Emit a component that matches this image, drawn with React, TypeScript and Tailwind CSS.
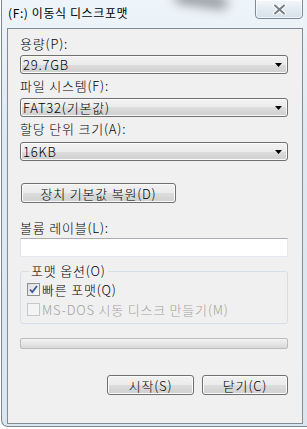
import React from "react";

const font = { fontFamily: '"Noto Sans CJK KR", "Noto Sans", sans-serif' };

function Combo({ value, className = "" }: { value: string; className?: string }) {
  return (
    <div
      className={`relative flex h-[19px] w-[268px] items-center rounded-[3px] border border-[#707070] bg-[linear-gradient(#f2f2f2,#ebebeb_50%,#dddddd_50%,#cfcfcf)] pl-[2px] text-[13px] leading-none tracking-[0.8px] text-black shadow-[inset_0_0_0_1px_#fbfbfb] ${className}`}
    >
      <span>{value}</span>
      <svg className="absolute right-[5px] top-[7px]" width="7" height="4" viewBox="0 0 7 4">
        <path d="M0 0h7L3.5 4z" fill="#000" />
      </svg>
    </div>
  );
}

function Button({ label, className = "" }: { label: string; className?: string }) {
  return (
    <div
      className={`flex h-[20px] items-center justify-center rounded-[3px] border border-[#707070] bg-[linear-gradient(#f2f2f2,#ebebeb_50%,#dddddd_50%,#cfcfcf)] text-[13px] leading-none tracking-[0.8px] text-black shadow-[inset_0_0_0_1px_#fbfbfb] ${className}`}
    >
      {label}
    </div>
  );
}

function Check({ checked, disabled, label }: { checked?: boolean; disabled?: boolean; label: string }) {
  return (
    <div className={`flex h-[14px] items-center gap-[2px] text-[13px] leading-none tracking-[0.8px] ${disabled ? "text-[#a3a3a3]" : "text-black"}`}>
      <div
        className={`flex h-[13px] w-[13px] items-center justify-center border ${
          disabled ? "border-[#c8c8c8] bg-[#f4f4f4]" : "border-[#8e8f8f] bg-[linear-gradient(135deg,#dcdcdc,#fbfbfb)]"
        }`}
      >
        {checked && (
          <svg width="9" height="9" viewBox="0 0 9 9">
            <path d="M1 4.5l2.3 2.6L8 1" stroke="#3c5a9a" strokeWidth="1.8" fill="none" />
          </svg>
        )}
      </div>
      <span>{label}</span>
    </div>
  );
}

export default function App() {
  return (
    <div className="relative h-[429px] w-[307px] overflow-hidden bg-white font-light" style={font}>
      {/* window frame */}
      <div className="ml-[1px] h-[427px] w-[310px] rounded-bl-[7px] border-b border-l border-[#7b8792] bg-[linear-gradient(#eef5fa,#dfe9f1_30%,#dce6ee)]">
        {/* title bar */}
        <div className="relative flex h-[28px] items-center pl-[6px] pb-[2px]">
          <div className="absolute left-[172px] top-[-6px] h-[12px] w-[54px] rotate-[8deg] rounded-full bg-[#60656c] opacity-70 blur-[6px]" />
          <span className="relative text-[12px] leading-none tracking-[0.6px] text-black font-normal">(F:) 이동식 디스크포맷</span>
          <div className="absolute left-[253px] top-[-1px] flex h-[20px] w-[48px] items-center justify-center rounded-b-[4px] border border-[#7d8b97] bg-[linear-gradient(#f4f8fb,#e3ebf2_50%,#d6e1ea)] shadow-[inset_0_0_0_1px_#ffffffaa]">
            <svg width="13" height="11" viewBox="0 0 13 11">
              <path d="M2 1.5l9 8M11 1.5l-9 8" stroke="#ffffff" strokeWidth="4" strokeLinecap="round" />
              <path d="M2 1.5l9 8M11 1.5l-9 8" stroke="#7a7e85" strokeWidth="2" strokeLinecap="round" />
            </svg>
          </div>
        </div>

        {/* client area */}
        <div className="ml-[5px] h-[396px] w-[296px] border border-[#838c95] bg-[#f0f0f0] pl-[12px] pr-[14px] text-[13px] tracking-[0.8px] text-black">
          <div className="mt-[8px] h-[14px] leading-[14px]">용량(P):</div>
          <Combo value="29.7GB" className="mt-[4px]" />
          <div className="mt-[5px] h-[14px] leading-[14px]">파일 시스템(F):</div>
          <Combo value="FAT32(기본값)" className="mt-[5px]" />
          <div className="mt-[5px] h-[14px] leading-[14px]">할당 단위 크기(A):</div>
          <Combo value="16KB" className="mt-[6px]" />

          <Button label="장치 기본값 복원(D)" className="mt-[22px] ml-[1px] w-[155px]" />

          <div className="mt-[18px] h-[14px] leading-[14px]">볼륨 레이블(L):</div>
          <div className="mt-[3px] h-[19px] w-[268px] border border-[#abadb3] border-r-[#e3e9ef] border-b-[#e3e9ef] border-l-[#e2e3ea] bg-white" />

          <fieldset className="mt-[7px] h-[60px] w-[268px] rounded-[3px] border border-[#d5dfe5] px-[6px]">
            <legend className="ml-[2px] px-[2px] leading-[14px]">포맷 옵션(O)</legend>
            <div className="mt-[4px] flex flex-col gap-[6px]">
              <Check checked label="빠른 포맷(Q)" />
              <Check disabled label="MS-DOS 시동 디스크 만들기(M)" />
            </div>
          </fieldset>

          <div className="mt-[14px] h-[11px] w-[268px] rounded-[2px] border border-[#bcbcbc] bg-[linear-gradient(#f3f3f3,#e6e6e6_50%,#d8d8d8)]" />

          <div className="mt-[26px] flex w-[268px] justify-end gap-[8px]">
            <Button label="시작(S)" className="w-[87px]" />
            <Button label="닫기(C)" className="w-[86px]" />
          </div>
        </div>
      </div>
    </div>
  );
}
